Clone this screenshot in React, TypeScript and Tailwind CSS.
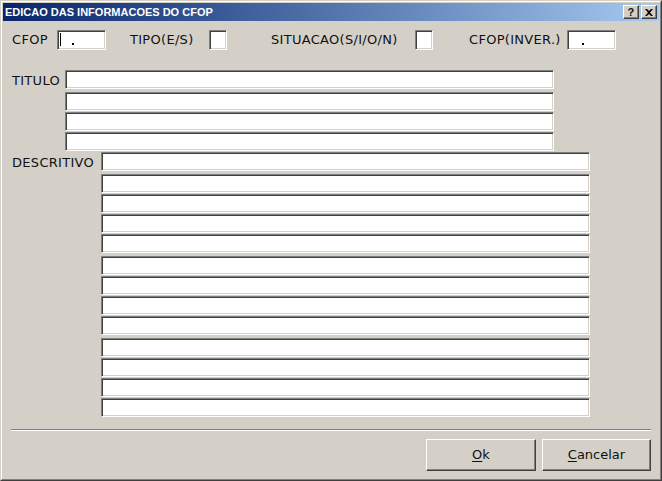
const sunken =
  'bg-white border border-t-[#808080] border-l-[#808080] border-b-white border-r-white shadow-[inset_1px_1px_0_#404040,inset_-1px_-1px_0_#d4d0c8]'

const raised =
  'bg-[#d4d0c8] border border-t-white border-l-white border-b-[#404040] border-r-[#404040] shadow-[inset_-1px_-1px_0_#808080]'

function Field({ className = '', children }: { className?: string; children?: React.ReactNode }) {
  return <div className={`${sunken} ${className}`}>{children}</div>
}

// rows come in groups of four, with a slightly wider gap between groups
function Lines({ count }: { count: number }) {
  return (
    <div className="flex flex-col">
      {Array.from({ length: count }).map((_, i) => (
        <Field
          key={i}
          className={`w-[489px] h-[19px] ${i === 0 ? '' : i % 4 === 1 ? 'mt-[3px]' : 'mt-[1px]'}`}
        />
      ))}
    </div>
  )
}

export default function App() {
  return (
    <div
      className="w-[662px] h-[481px] bg-[#d4d0c8] border border-t-[#d4d0c8] border-l-[#d4d0c8] border-b-[#404040] border-r-[#404040] text-[13px] text-[#111] tracking-[0.3px]"
      style={{ fontFamily: '"DejaVu Sans", Tahoma, sans-serif' }}
    >
      <div className="h-full flex flex-col border border-t-white border-l-white border-b-[#808080] border-r-[#808080] p-px">
        {/* Title bar */}
        <div className="h-[18px] flex items-center justify-between bg-gradient-to-r from-[#0a246a] to-[#a6caf0] pl-[2px] pr-[2px]">
          <span
            className="text-white font-bold text-[11px] tracking-normal"
            style={{ fontFamily: '"Liberation Sans", Arial, sans-serif' }}
          >
            EDICAO DAS INFORMACOES DO CFOP
          </span>
          <div className="flex gap-[2px]">
            <button className={`${raised} w-[16px] h-[14px] flex items-center justify-center p-0`}>
              <span className="font-bold text-[11px] leading-none" style={{ fontFamily: '"Liberation Sans", Arial, sans-serif' }}>?</span>
            </button>
            <button className={`${raised} w-[16px] h-[14px] flex items-center justify-center p-0`}>
              <svg width="8" height="7" viewBox="0 0 8 7">
                <path d="M0 0h2l2 2 2-2h2L5 3.5 8 7H6L4 5 2 7H0l3-3.5z" fill="#000" />
              </svg>
            </button>
          </div>
        </div>

        {/* Row 1 */}
        <div className="flex items-center pl-[9px] mt-[9px]">
          <span className="w-[45px]">CFOP</span>
          <Field className="w-[49px] h-[20px] relative">
            <span className="absolute left-[2px] top-[2px] w-[1px] h-[13px] bg-black" />
            <span className="absolute left-[14px] top-[12px] w-[2px] h-[2px] bg-black" />
          </Field>
          <span className="ml-[24px] w-[79px]">TIPO(E/S)</span>
          <Field className="w-[18px] h-[20px]" />
          <span className="ml-[44px] w-[144px]">SITUACAO(S/I/O/N)</span>
          <Field className="w-[18px] h-[20px]" />
          <span className="ml-[36px] w-[98px]">CFOP(INVER.)</span>
          <Field className="w-[49px] h-[20px] relative">
            <span className="absolute left-[14px] top-[12px] w-[2px] h-[2px] bg-black" />
          </Field>
        </div>

        {/* Titulo */}
        <div className="flex pl-[9px] mt-[20px]">
          <span className="w-[53px] pt-[1px]">TITULO</span>
          <Lines count={4} />
        </div>

        {/* Descritivo */}
        <div className="flex pl-[9px] mt-[1px]">
          <span className="w-[89px] pt-[1px]">DESCRITIVO</span>
          <Lines count={13} />
        </div>

        {/* Separator */}
        <div className="mx-[8px] mt-[12px] border-t border-t-[#808080] border-b border-b-white" />

        {/* Buttons */}
        <div className="flex justify-end gap-[6px] pr-[8px] mt-[8px]">
          <button className={`${raised} w-[110px] h-[32px] tracking-normal`}>
            <span className="underline underline-offset-2">O</span>k
          </button>
          <button className={`${raised} w-[109px] h-[32px] tracking-normal`}>
            <span className="underline underline-offset-2">C</span>ancelar
          </button>
        </div>
      </div>
    </div>
  )
}
